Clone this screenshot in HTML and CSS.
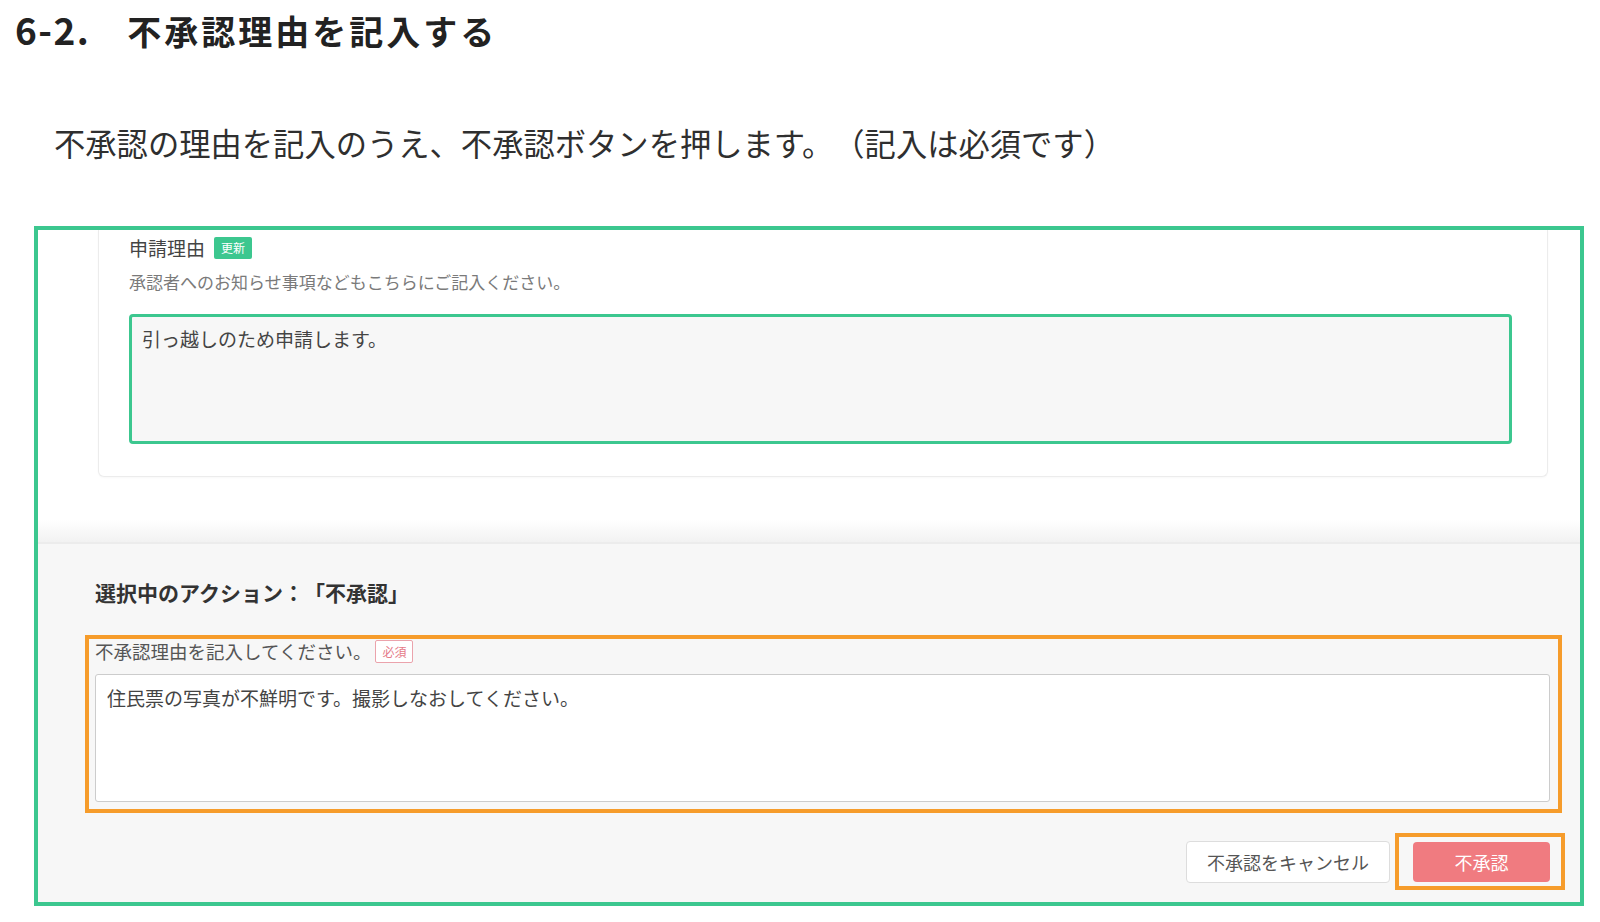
FILE: index.html
```html
<!DOCTYPE html>
<html lang="ja">

<head>
    <meta charset="utf-8">
    <title>6-2. 不承認理由を記入する</title>
    <link rel="stylesheet" href="styles.css">
</head>

<body>
    <h1 class="title"><span class="title-num">6-2.</span>　不承認理由を記入する</h1>
    <p class="lead">不承認の理由を記入のうえ、不承認ボタンを押します。（記入は必須です）</p>

    <div class="shot">
        <div class="shot-top">
            <div class="card">
                <div class="field-label">申請理由<span class="tag-update">更新</span></div>
                <div class="field-help">承認者へのお知らせ事項などもこちらにご記入ください。</div>
                <textarea class="input input-active" readonly>引っ越しのため申請します。</textarea>
            </div>
        </div>

        <div class="shot-action">
            <div class="action-title">選択中のアクション：「不承認」</div>

            <div class="mark mark-reason">
                <div class="field-label field-label-sm">不承認理由を記入してください。<span class="tag-required">必須</span></div>
                <textarea class="input input-reason" readonly>住民票の写真が不鮮明です。撮影しなおしてください。</textarea>
            </div>

            <div class="buttons">
                <button class="btn btn-cancel">不承認をキャンセル</button>
                <div class="mark mark-button">
                    <button class="btn btn-reject">不承認</button>
                </div>
            </div>
        </div>
    </div>
</body>

</html>
```

FILE: styles.css
```css
body {
    margin: 0;
    padding: 0 15px;
    font-family: "Noto Sans CJK JP", "Noto Sans", sans-serif;
    color: #333;
    background: #fff;
    text-spacing-trim: space-all;
}

.title {
    margin: 9px 0 0;
    height: 44px;
    font-size: 34px;
    line-height: 44px;
    font-weight: 700;
    letter-spacing: 3px;
    color: #222;
}

.title-num {
    font-size: 37px;
    line-height: 30px;
    letter-spacing: 1.5px;
}

.lead {
    margin: 68px 0 0 39px;
    font-size: 31.3px;
    line-height: 44px;
    color: #2f2f2f;
}

/* screenshot frame */
.shot {
    width: 1550px;
    box-sizing: border-box;
    margin: 61px 0 0 19px;
    border: 4px solid #3cc78f;
    background: #f7f7f7;
}

.shot-top {
    padding: 0 32px 65px 60px;
    background: linear-gradient(to bottom, #fff calc(100% - 22px), #f2f2f2);
    border-bottom: 2px solid #ececec;
}

.card {
    padding: 5px 35px 32px 30px;
    background: #fff;
    border: 1px solid #ececec;
    border-top: none;
    border-radius: 0 0 6px 6px;
    box-shadow: 0 1px 2px rgba(0, 0, 0, 0.03);
}

.field-label {
    display: flex;
    align-items: center;
    font-size: 19px;
    line-height: 26px;
    color: #444;
}

.field-label-sm {
    font-size: 18.5px;
    line-height: 24px;
    color: #555;
}

.tag-update {
    margin-left: 9px;
    padding: 0 7px;
    height: 22px;
    line-height: 22px;
    font-size: 12px;
    color: #fff;
    background: #3cc78f;
    border-radius: 2px;
}

.tag-required {
    margin-left: 4px;
    padding: 0 6px;
    height: 21px;
    line-height: 21px;
    font-size: 12px;
    color: #e57a88;
    background: #fff;
    border: 1px solid #eba3ac;
    border-radius: 2px;
}

.field-help {
    margin-top: 9px;
    font-size: 17px;
    line-height: 24px;
    color: #7a7a7a;
}

.input {
    display: block;
    width: 100%;
    box-sizing: border-box;
    resize: none;
    outline: none;
    font-family: inherit;
    font-size: 19px;
    line-height: 26px;
    color: #444;
}

.input-active {
    margin-top: 20px;
    height: 130px;
    padding: 9px 10px;
    background: #f7f7f7;
    border: 3px solid #3cc78f;
    border-radius: 4px;
}

.shot-action {
    padding: 34px 30px 12px 57px;
}

.action-title {
    font-size: 21px;
    line-height: 28px;
    font-weight: 700;
    color: #333;
}

/* orange annotation boxes */
.mark {
    border: 4px solid #f69c2b;
}

.mark-reason {
    margin: 29px -12px 0 -10px;
    padding: 0 8px 7px 6px;
}

.input-reason {
    margin-top: 11px;
    height: 128px;
    padding: 10px 11px;
    background: #fff;
    border: 1px solid #ccc;
    border-radius: 3px;
}

.buttons {
    display: flex;
    justify-content: flex-end;
    align-items: center;
    margin-top: 20px;
}

.mark-button {
    margin: 0 -15px 0 5px;
    padding: 5px 11px 4px 14px;
}

.btn {
    display: block;
    font-family: inherit;
    font-size: 18px;
    border-radius: 4px;
    cursor: pointer;
}

.btn-cancel {
    width: 204px;
    height: 42px;
    background: #fff;
    border: 1px solid #ddd;
    color: #555;
}

.btn-reject {
    width: 137px;
    height: 40px;
    background: #f07b80;
    border: none;
    color: #fff;
}
```
